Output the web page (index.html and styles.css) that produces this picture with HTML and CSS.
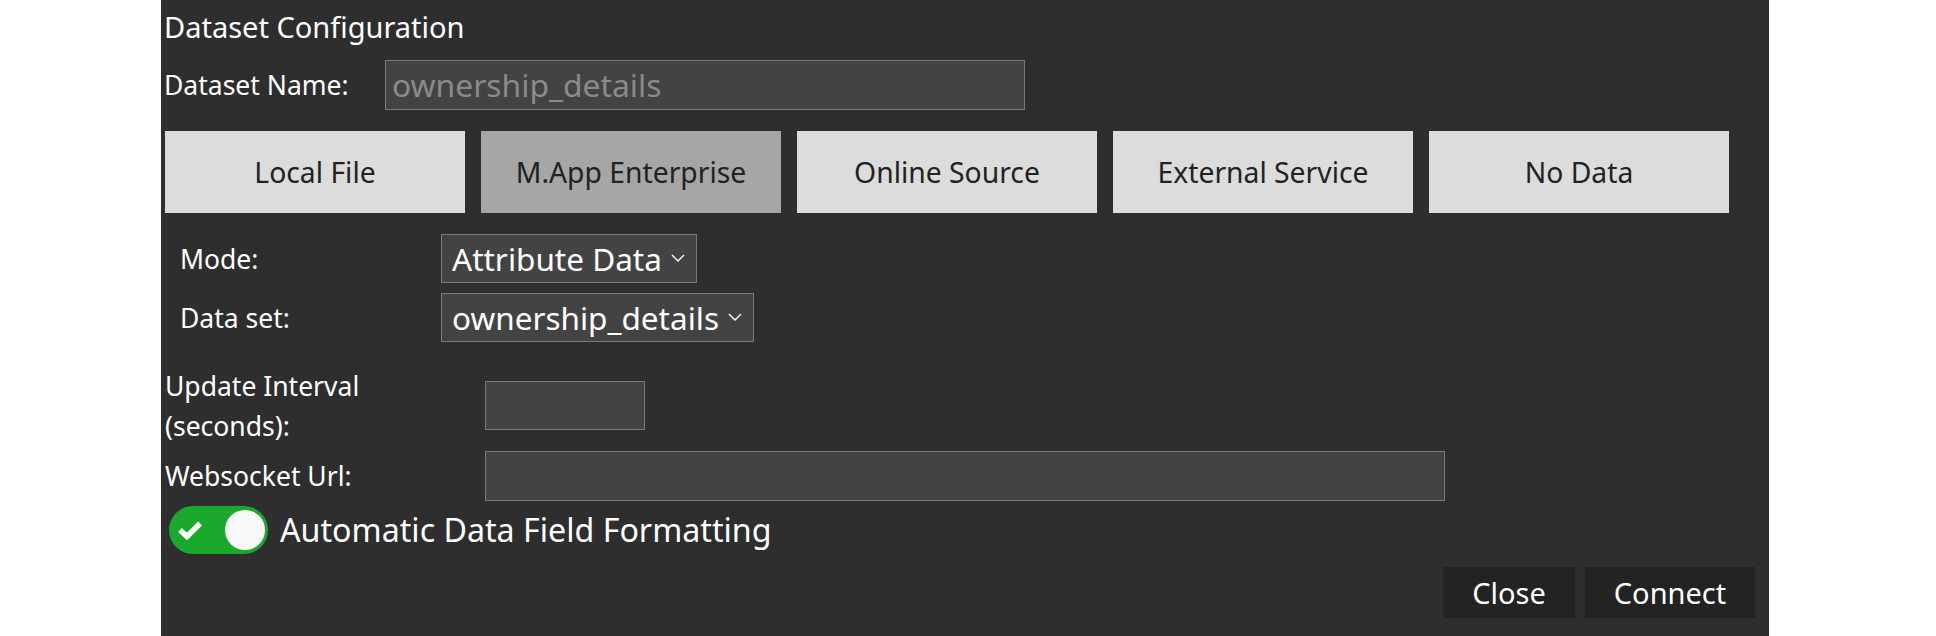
FILE: index.html
```html
<!DOCTYPE html>
<html lang="en">
<head>
<meta charset="utf-8">
<title>Dataset Configuration</title>
<link rel="stylesheet" href="styles.css">
</head>
<body>
<div class="panel">
  <div class="title">Dataset Configuration</div>

  <div class="name-row">
    <label class="name-label">Dataset Name:</label>
    <div class="text-input name-input"><span class="placeholder">ownership_details</span></div>
  </div>

  <div class="sources">
    <button class="source">Local File</button>
    <button class="source active">M.App Enterprise</button>
    <button class="source">Online Source</button>
    <button class="source">External Service</button>
    <button class="source">No Data</button>
  </div>

  <div class="mode-block">
    <div class="sel-row">
      <label class="sel-label">Mode:</label>
      <div class="select"><span>Attribute Data</span><svg class="chev" viewBox="0 0 14 8" width="14" height="8"><path d="M1 1 L7 7 L13 1" fill="none" stroke="#fff" stroke-width="1.4"/></svg></div>
    </div>
    <div class="sel-row second">
      <label class="sel-label">Data set:</label>
      <div class="select"><span>ownership_details</span><svg class="chev" viewBox="0 0 14 8" width="14" height="8"><path d="M1 1 L7 7 L13 1" fill="none" stroke="#fff" stroke-width="1.4"/></svg></div>
    </div>
  </div>

  <div class="field-row update-row">
    <label class="field-label two-line">Update Interval<br>(seconds):</label>
    <div class="text-input interval-input"></div>
  </div>
  <div class="field-row ws-row">
    <label class="field-label">Websocket Url:</label>
    <div class="text-input ws-input"></div>
  </div>

  <div class="toggle-row">
    <div class="toggle">
      <svg class="check" viewBox="0 0 26 20" width="26" height="20"><path d="M3 10 L10 16.5 L23 3.5" fill="none" stroke="#fff" stroke-width="5.5" stroke-linejoin="miter"/></svg>
      <div class="knob"></div>
    </div>
    <span class="toggle-label">Automatic Data Field Formatting</span>
  </div>

  <div class="footer">
    <button class="dark-btn close-btn">Close</button>
    <button class="dark-btn connect-btn">Connect</button>
  </div>
</div>
</body>
</html>
```

FILE: styles.css
```css
html, body {
  margin: 0;
  padding: 0;
  background: #ffffff;
  height: 636px;
  overflow: hidden;
}

body {
  font-family: "Noto Sans", "Open Sans", sans-serif;
}

.panel {
  margin-left: 161px;
  width: 1608px;
  height: 636px;
  background: #2e2e2e;
  color: #ffffff;
  box-sizing: border-box;
  padding-top: 8px;
  display: flex;
  flex-direction: column;
}

.title {
  font-size: 29px;
  line-height: 38px;
  height: 38px;
  padding-left: 3px;
}

.name-row {
  display: flex;
  align-items: center;
  margin-top: 14px;
}

.name-label {
  box-sizing: border-box;
  width: 224px;
  padding-left: 3px;
  font-size: 26.5px;
  line-height: 36px;
}

.text-input {
  box-sizing: border-box;
  background: #434343;
  border: 1px solid #7a7a7a;
}

.name-input {
  width: 640px;
  height: 50px;
  padding-left: 6px;
  display: flex;
  align-items: center;
}

.placeholder {
  color: #8a8a8a;
  font-size: 31.8px;
  line-height: 40px;
}

.sources {
  display: flex;
  gap: 16px;
  margin-top: 21px;
  padding-left: 4px;
}

.source {
  width: 300px;
  height: 82px;
  border: none;
  margin: 0;
  padding: 0;
  background: #dcdcdc;
  color: #222222;
  font-family: "Noto Sans", "Open Sans", sans-serif;
  font-size: 28.3px;
}

.source.active {
  background: #a6a6a6;
}

.mode-block {
  margin-top: 21px;
  padding-left: 19px;
}

.sel-row {
  display: flex;
  align-items: center;
}

.sel-row.second {
  margin-top: 10px;
}

.sel-label {
  width: 261px;
  font-size: 26.5px;
  line-height: 36px;
}

.select {
  box-sizing: border-box;
  height: 49px;
  background: #434343;
  border: 1px solid #7a7a7a;
  padding: 0 11px 0 10px;
  display: flex;
  align-items: center;
  gap: 9px;
  font-size: 31.5px;
  line-height: 40px;
}

.chev {
  display: block;
  margin-top: -2px;
}

.field-row {
  display: flex;
  align-items: center;
  padding-left: 4px;
}

.update-row {
  margin-top: 19px;
}

.ws-row {
  margin-top: 5px;
}

.field-label {
  box-sizing: border-box;
  width: 320px;
  font-size: 26.5px;
  line-height: 39px;
}

.field-label.two-line {
  line-height: 40px;
  padding-top: 5px;
}

.interval-input {
  width: 160px;
  height: 49px;
  margin-top: 4px;
}

.ws-input {
  width: 960px;
  height: 50px;
}

.toggle-row {
  display: flex;
  align-items: center;
  margin-top: 5px;
  padding-left: 8px;
  gap: 12px;
}

.toggle {
  box-sizing: border-box;
  width: 99px;
  height: 48px;
  border-radius: 24px;
  background: #1aa92d;
  display: flex;
  align-items: center;
  justify-content: space-between;
  padding: 0 3px 0 8px;
}

.check {
  display: block;
}

.knob {
  width: 40px;
  height: 40px;
  border-radius: 50%;
  background: #f8f8f8;
}

.toggle-label {
  font-size: 32.2px;
  line-height: 42px;
}

.footer {
  display: flex;
  justify-content: flex-end;
  gap: 10px;
  margin-top: 13px;
  padding-right: 14px;
}

.dark-btn {
  height: 51px;
  border: none;
  margin: 0;
  padding: 0;
  background: #232323;
  color: #ffffff;
  font-family: "Noto Sans", "Open Sans", sans-serif;
  font-size: 29px;
}

.close-btn {
  width: 132px;
}

.connect-btn {
  width: 170px;
}
```
